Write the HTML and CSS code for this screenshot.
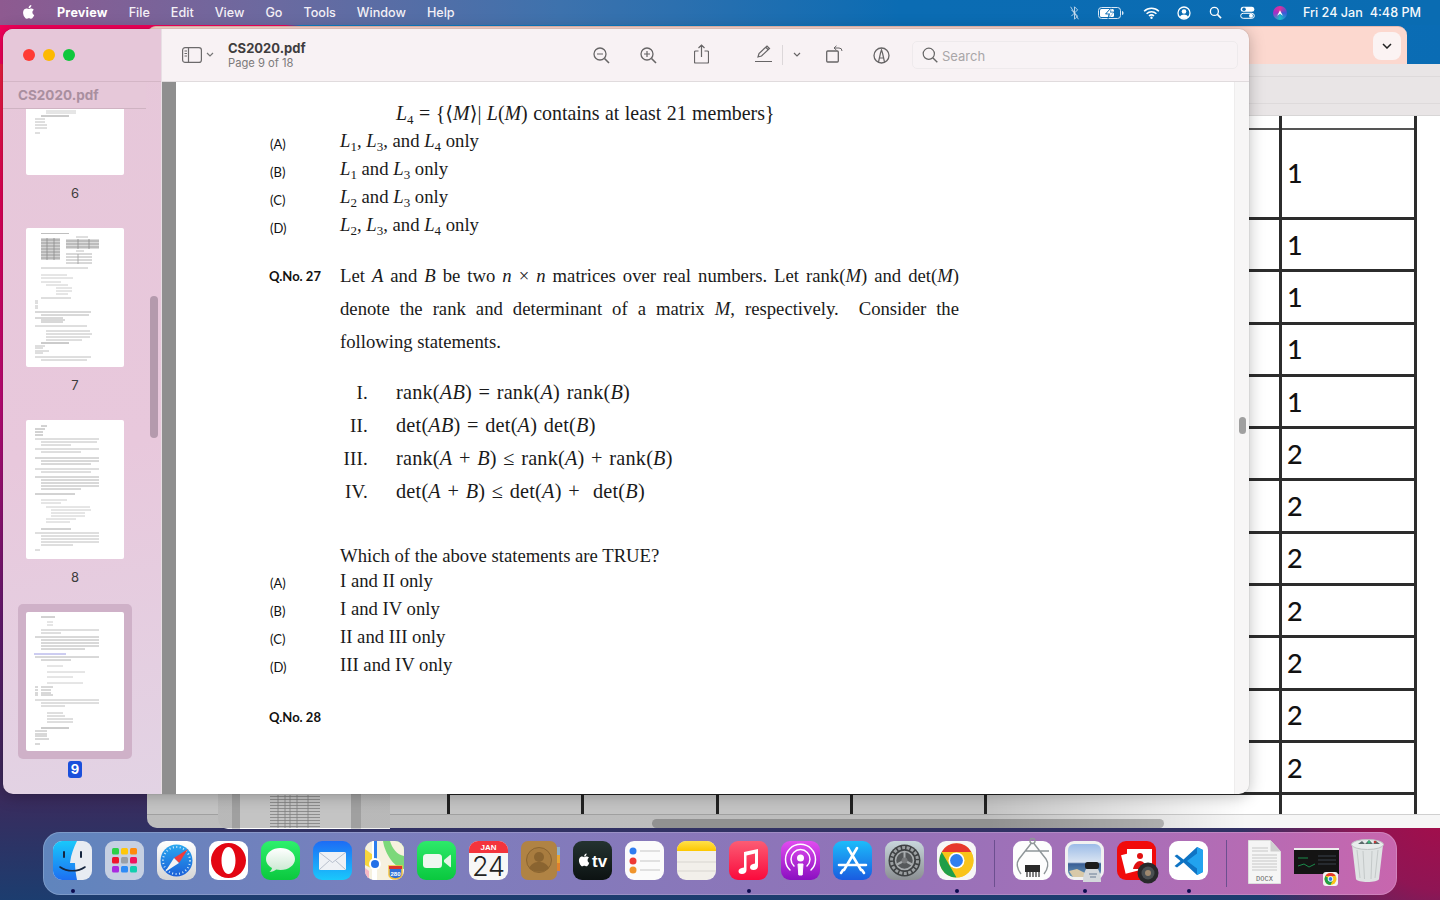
FILE: index.html
```html
<!DOCTYPE html>
<html lang="en">
<head>
<meta charset="utf-8">
<title>Preview - CS2020.pdf</title>
<link rel="stylesheet" href="styles.css">
</head>
<body>
<div class="desktop">

  <header class="menubar">
    <svg class="apple" viewBox="0 0 24 24"><path fill="#fff" d="M17.05 12.54c-.03-2.6 2.13-3.85 2.22-3.91-1.21-1.77-3.09-2.01-3.76-2.04-1.6-.16-3.12.94-3.93.94-.81 0-2.06-.92-3.39-.89-1.74.03-3.35 1.01-4.25 2.57-1.81 3.14-.46 7.8 1.3 10.35.86 1.25 1.89 2.65 3.24 2.6 1.3-.05 1.79-.84 3.36-.84 1.57 0 2.01.84 3.39.81 1.4-.02 2.28-1.27 3.14-2.53.99-1.45 1.4-2.85 1.42-2.92-.03-.01-2.72-1.04-2.74-4.14zM14.46 4.9c.72-.87 1.2-2.08 1.07-3.28-1.03.04-2.28.69-3.02 1.55-.66.77-1.24 2-1.09 3.18 1.15.09 2.33-.58 3.04-1.45z"/></svg>
    <nav class="menus">
      <span class="menu-app">Preview</span><span>File</span><span>Edit</span><span>View</span><span>Go</span><span>Tools</span><span>Window</span><span>Help</span>
    </nav>
    <div class="status">
      <svg class="st st-bt" viewBox="0 0 14 18"><path d="M3 5l8 8-4 4V1l4 4-8 8" fill="none" stroke="#cfe0f0" stroke-width="1.1"/><path d="M2 1l10 16" stroke="#cfe0f0" stroke-width="1.1"/></svg>
      <svg class="st st-bat" viewBox="0 0 26 12"><rect x=".5" y=".5" width="22" height="11" rx="3" fill="none" stroke="#dbe8f5"/><rect x="2" y="2" width="14" height="8" rx="1.5" fill="#fff"/><path d="M24 4v4c1 0 1.500-1 1.500-2s-.5-2-1.500-2z" fill="#dbe8f5"/><path d="M13 .8L7.500 7H11l-1 4.600L16 5h-3.500z" fill="#0a6cb3" stroke="#0a6cb3" stroke-width=".8"/><path d="M13 1.500L8.500 6.500H12l-1 4 4.500-5H12z" fill="#fff"/></svg>
      <svg class="st st-wifi" viewBox="0 0 18 13"><path d="M1 4.600a11.500 11.500 0 0 1 16 0M3.700 7.300a7.600 7.600 0 0 1 10.600 0M6.300 9.800a3.900 3.900 0 0 1 5.400 0" fill="none" stroke="#fff" stroke-width="1.700"/><circle cx="9" cy="11.700" r="1.300" fill="#fff"/></svg>
      <svg class="st st-user" viewBox="0 0 14 14"><circle cx="7" cy="7" r="6" fill="none" stroke="#fff" stroke-width="1.300"/><circle cx="7" cy="5.500" r="2.300" fill="#fff"/><path d="M2.800 11c1-2 2.500-2.600 4.200-2.600s3.200.6 4.200 2.600a6 6 0 0 1-8.400 0z" fill="#fff"/></svg>
      <svg class="st st-search" viewBox="0 0 14 14"><circle cx="5.800" cy="5.800" r="4.300" fill="none" stroke="#fff" stroke-width="1.400"/><path d="M9 9l4 4" stroke="#fff" stroke-width="1.700"/></svg>
      <svg class="st st-ctrl" viewBox="0 0 15 13"><rect x=".7" y=".7" width="13.600" height="5" rx="2.500" fill="#fff"/><circle cx="4" cy="3.200" r="1.800" fill="#0a6cb3"/><rect x=".7" y="7.300" width="13.600" height="5" rx="2.500" fill="none" stroke="#fff"/><circle cx="11" cy="9.800" r="2" fill="#fff"/></svg>
      <span class="siri"><svg viewBox="0 0 14 14"><path d="M7 3L3 11l4-3 4 3z" fill="#fff"/></svg></span>
      <span class="clock"><span>Fri 24 Jan</span><span>4:48 PM</span></span>
    </div>
  </header>

  <section class="win-back">
    <div class="back-head"><span class="back-btn"><svg viewBox="0 0 10 6"><path d="M1 1l4 4 4-4" fill="none" stroke="#222" stroke-width="1.500"/></svg></span></div>
    <div class="back-tools"></div>
    <div class="sheet">
      <div class="cell tall"></div><div class="cell tall"></div><div class="cell tall"></div><div class="cell tall"></div><div class="cell tall"></div><div class="cell tall val">1</div>
      <div class="cell"></div><div class="cell"></div><div class="cell"></div><div class="cell"></div><div class="cell"></div><div class="cell val">1</div>
      <div class="cell"></div><div class="cell"></div><div class="cell"></div><div class="cell"></div><div class="cell"></div><div class="cell val">1</div>
      <div class="cell"></div><div class="cell"></div><div class="cell"></div><div class="cell"></div><div class="cell"></div><div class="cell val">1</div>
      <div class="cell"></div><div class="cell"></div><div class="cell"></div><div class="cell"></div><div class="cell"></div><div class="cell val">1</div>
      <div class="cell"></div><div class="cell"></div><div class="cell"></div><div class="cell"></div><div class="cell"></div><div class="cell val">2</div>
      <div class="cell"></div><div class="cell"></div><div class="cell"></div><div class="cell"></div><div class="cell"></div><div class="cell val">2</div>
      <div class="cell"></div><div class="cell"></div><div class="cell"></div><div class="cell"></div><div class="cell"></div><div class="cell val">2</div>
      <div class="cell"></div><div class="cell"></div><div class="cell"></div><div class="cell"></div><div class="cell"></div><div class="cell val">2</div>
      <div class="cell"></div><div class="cell"></div><div class="cell"></div><div class="cell"></div><div class="cell"></div><div class="cell val">2</div>
      <div class="cell"></div><div class="cell"></div><div class="cell"></div><div class="cell"></div><div class="cell"></div><div class="cell val">2</div>
      <div class="cell"></div><div class="cell"></div><div class="cell"></div><div class="cell"></div><div class="cell"></div><div class="cell val">2</div>
      <div class="cell"></div><div class="cell"></div><div class="cell"></div><div class="cell"></div><div class="cell"></div><div class="cell"></div>
    </div>
    <div class="hscroll"><span class="hthumb"></span></div>
  </section>

  <section class="win-mid">
    <div class="mid-bar"></div>
    <div class="mid-page">
      <svg class="mid-table" viewBox="0 0 50 33"><path d="M0 1.500h50M0 4.500h50M0 7.500h50M0 10.500h50M0 13.500h50M0 16.500h50M0 19.500h50M0 22.500h50M0 25.500h50M0 28.500h50M0 31.500h50" stroke="#a6a6a6" stroke-width=".8"/><path d="M8 0v33M15 0v33M20 0v33M27 0v33M38 0v33" stroke="#a6a6a6" stroke-width=".8"/></svg>
    </div>
    <div class="mid-bar mid-bar-end"></div>
  </section>

  <div class="cast"></div>

  <main class="win-main">
    <aside class="sidebar">
      <div class="side-top">
        <span class="light red"></span><span class="light yellow"></span><span class="light green"></span>
      </div>
      <div class="side-title">CS2020.pdf</div>
      <div class="thumbs">
        <div class="thumb">
          <div class="tp-wrap"><svg class="tpage" viewBox="0 0 98 139"><path d="M20 72h30M20 75h30M20 77h30" stroke="#bbb" fill="none"/><path d="M15 80h28" stroke="#777"/><path d="M9 83h10M9 86h10M9 89h12M9 92h12M9 97h5" stroke="#aaa"/></svg></div>
          <div class="tnum">6</div>
        </div>
        <div class="thumb">
          <div class="tp-wrap"><svg class="tpage" viewBox="0 0 98 139"><path d="M15 5.500h28" stroke="#aaa"/><rect x="15" y="10" width="19" height="22" fill="#d4d4d4"/><path d="M15 12h19M15 15h19M15 18h19M15 21h19M15 24h19M15 27h19M15 30h19M21 10v22M28 10v22" stroke="#888"/><rect x="40" y="11" width="33" height="10" fill="#dcdcdc"/><path d="M40 13h33M40 16h33M40 19h33M52 11v10M63 11v10" stroke="#888"/><path d="M50 9h12M50 23h8" stroke="#aaa"/><path d="M40 26h26M40 29h26M40 32h26M40 35h26M52 26v10" stroke="#999"/><path d="M15 40h47" stroke="#aaa"/><path d="M15 47h26M15 50h32M15 54h20M20 57h22M30 60h16M30 63h16M30 66h12" stroke="#bbb"/><path d="M15 70h30M9 73h3M9 75h3M9 78h3M9 80h3" stroke="#aaa"/><path d="M9 84h6M15 84h50M15 87h48M9 90h6M15 90h22M15 92h24M15 94h22" stroke="#999"/><path d="M9 98h6M15 98h46M20 103h44M20 106h46M20 109h44M20 112h36" stroke="#aaa"/><path d="M15 115h28" stroke="#777"/><path d="M9 118h10M9 120h8M9 123h14M9 125h8" stroke="#aaa"/><path d="M9 129h6M15 129h50M15 132h46" stroke="#aaa"/></svg></div>
          <div class="tnum">7</div>
        </div>
        <div class="thumb">
          <div class="tp-wrap"><svg class="tpage" viewBox="0 0 98 139"><path d="M15 6h6M9 9h10M9 12h8M9 15h8" stroke="#888"/><path d="M9 19h6M15 19h58M15 22h56M15 25h30" stroke="#aaa"/><path d="M9 29h6M15 29h58M15 32h40" stroke="#aaa"/><path d="M9 38h6M15 38h58M15 41h58M15 44h50" stroke="#999"/><path d="M9 49h6M15 49h58M15 52h50" stroke="#aaa"/><path d="M9 57h6M15 57h58M15 60h58M15 63h58M15 66h58M15 69h40" stroke="#999"/><path d="M9 74h6M15 74h34" stroke="#888"/><path d="M15 80h26M15 83h20M20 87h44M25 90h40M25 93h34M25 96h34M20 99h30M20 102h24" stroke="#bbb"/><path d="M15 109h30" stroke="#888"/><path d="M9 113h6M15 113h58M15 116h58M15 119h58M15 122h58M15 125h32" stroke="#aaa"/><path d="M9 130h5" stroke="#aaa"/></svg></div>
          <div class="tnum">8</div>
        </div>
        <div class="thumb current">
          <div class="tp-wrap"><svg class="tpage" viewBox="0 0 98 139"><path d="M15 5h14" stroke="#888"/><path d="M21 10h6M21 13h6" stroke="#bbb"/><path d="M15 18h58M15 21h20" stroke="#aaa"/><path d="M9 25h6M15 25h58M15 28h58M15 31h58M15 34h58M15 37h44" stroke="#999"/><path d="M8 42h32" stroke="#7a7ad8"/><path d="M9 45h6M15 45h58M15 48h30" stroke="#999"/><path d="M21 54h16M21 60h38M21 65h26M21 71h36" stroke="#bbb"/><path d="M9 75h3M15 75h12M9 78h3M15 78h10M9 81h3M15 81h10M9 83h3M15 83h12" stroke="#999"/><path d="M9 88h6M15 88h58M15 91h58M15 94h24" stroke="#aaa"/><path d="M21 101h16M21 104h18M21 107h26M21 110h26" stroke="#aaa"/><path d="M15 116h28" stroke="#777"/><path d="M9 119h12M9 122h12M9 124h12M9 127h14" stroke="#999"/><path d="M9 132h5" stroke="#999"/></svg></div>
          <div class="tnum">9</div>
        </div>
      </div>
      <span class="side-scroll"></span>
    </aside>

    <div class="content">
      <div class="toolbar">
        <svg class="tb-side" viewBox="0 0 20 16"><rect x=".6" y=".6" width="18.800" height="14.800" rx="2.500" fill="none" stroke="#6c6a6b" stroke-width="1.200"/><path d="M6.500 1v14" stroke="#6c6a6b" stroke-width="1.200"/><path d="M2.500 4h2.500M2.500 6.500h2.500M2.500 9h2.500" stroke="#6c6a6b"/></svg>
        <svg class="tb-chev" viewBox="0 0 8 6"><path d="M1 1l3 3 3-3" fill="none" stroke="#777" stroke-width="1.200"/></svg>
        <div class="doc-name"><div class="doc-title">CS2020.pdf</div><div class="doc-page">Page 9 of 18</div></div>
        <div class="tb-icons">
          <svg class="tb zoom-out" viewBox="0 0 17 17"><circle cx="7" cy="7" r="6" fill="none" stroke="#676566" stroke-width="1.300"/><path d="M4 7h6" stroke="#676566" stroke-width="1.200"/><path d="M11.500 11.500l4.500 4.500" stroke="#676566" stroke-width="1.600"/></svg>
          <svg class="tb zoom-in" viewBox="0 0 17 17"><circle cx="7" cy="7" r="6" fill="none" stroke="#676566" stroke-width="1.300"/><path d="M4 7h6M7 4v6" stroke="#676566" stroke-width="1.200"/><path d="M11.500 11.500l4.500 4.500" stroke="#676566" stroke-width="1.600"/></svg>
          <svg class="tb share" viewBox="0 0 15 20"><path d="M4.500 7H1.500a1 1 0 0 0-1 1v10a1 1 0 0 0 1 1h12a1 1 0 0 0 1-1V8a1 1 0 0 0-1-1h-3M7.500 13V1.500M4.500 4l3-3 3 3" fill="none" stroke="#676566" stroke-width="1.200"/></svg>
          <svg class="tb pen" viewBox="0 0 18 18"><path d="M3 12l1-3.500 8-7.500 2.500 2.500-8 7.500zM11 2.500L13.500 5" fill="none" stroke="#676566" stroke-width="1.200"/><path d="M0 16.500h17" stroke="#676566" stroke-width="1.200"/></svg>
          <span class="tb-div"></span>
          <svg class="tb-chev tb-chev2" viewBox="0 0 8 6"><path d="M1 1l3 3 3-3" fill="none" stroke="#676566" stroke-width="1.200"/></svg>
          <svg class="tb rotate" viewBox="0 0 17 18"><rect x=".7" y="6" width="11.600" height="11" rx="1" fill="none" stroke="#676566" stroke-width="1.300"/><path d="M8 3h5a3 3 0 0 1 3 3M10.500 .8L8 3l2.500 2.200" fill="none" stroke="#676566" stroke-width="1"/></svg>
          <svg class="tb markup" viewBox="0 0 17 17"><circle cx="8.500" cy="8.500" r="7.500" fill="none" stroke="#676566" stroke-width="1.300"/><path d="M5.500 15l2-9 1-3 1 3 2 9M6.500 11h4" fill="none" stroke="#676566" stroke-width="1.200"/></svg>
        </div>
        <div class="search">
          <svg viewBox="0 0 16 16"><circle cx="6.800" cy="6.800" r="5.600" fill="none" stroke="#666" stroke-width="1.200"/><path d="M11 11l4.300 4.300" stroke="#666" stroke-width="1.400"/></svg>
          <span>Search</span>
        </div>
      </div>

      <div class="viewer">
        <div class="gutter"></div>
        <article class="page">
          <div class="formula"><span class="m">L<sub>4</sub></span> = {⟨<span class="m">M</span>⟩| <span class="m">L</span>(<span class="m">M</span>) contains at least 21 members}</div>
          <div class="opt"><span class="lab">(A)</span><span><span class="m">L<sub>1</sub></span>, <span class="m">L<sub>3</sub></span>, and <span class="m">L<sub>4</sub></span> only</span></div>
          <div class="opt"><span class="lab">(B)</span><span><span class="m">L<sub>1</sub></span> and <span class="m">L<sub>3</sub></span> only</span></div>
          <div class="opt"><span class="lab">(C)</span><span><span class="m">L<sub>2</sub></span> and <span class="m">L<sub>3</sub></span> only</span></div>
          <div class="opt"><span class="lab">(D)</span><span><span class="m">L<sub>2</sub></span>, <span class="m">L<sub>3</sub></span>, and <span class="m">L<sub>4</sub></span> only</span></div>

          <div class="question">
            <span class="lab qno">Q.No. 27</span>
            <div class="qtext">
              <p class="just">Let <span class="m">A</span> and <span class="m">B</span> be two <span class="m">n</span> × <span class="m">n</span> matrices over real numbers. Let rank(<span class="m">M</span>) and det(<span class="m">M</span>)</p>
              <p class="just">denote the rank and determinant of a matrix <span class="m">M</span>, respectively. &nbsp;Consider the</p>
              <p>following statements.</p>
            </div>
          </div>

          <div class="stmts">
            <div class="stmt"><span class="rom">I.</span><span>rank(<span class="m">AB</span>) = rank(<span class="m">A</span>) rank(<span class="m">B</span>)</span></div>
            <div class="stmt"><span class="rom">II.</span><span>det(<span class="m">AB</span>) = det(<span class="m">A</span>) det(<span class="m">B</span>)</span></div>
            <div class="stmt"><span class="rom">III.</span><span>rank(<span class="m">A</span> + <span class="m">B</span>) ≤ rank(<span class="m">A</span>) + rank(<span class="m">B</span>)</span></div>
            <div class="stmt"><span class="rom">IV.</span><span>det(<span class="m">A</span> + <span class="m">B</span>) ≤ det(<span class="m">A</span>) + &nbsp;det(<span class="m">B</span>)</span></div>
          </div>

          <div class="which">Which of the above statements are TRUE?</div>
          <div class="opt"><span class="lab">(A)</span><span>I and II only</span></div>
          <div class="opt"><span class="lab">(B)</span><span>I and IV only</span></div>
          <div class="opt"><span class="lab">(C)</span><span>II and III only</span></div>
          <div class="opt"><span class="lab">(D)</span><span>III and IV only</span></div>
          <div class="qnext"><span class="lab qno">Q.No. 28</span></div>
        </article>
        <div class="vscroll"><span class="vthumb"></span></div>
      </div>
    </div>
  </main>

  <footer class="dock">
    <!-- Finder -->
    <span class="di run"><svg viewBox="0 0 39 39"><defs><linearGradient id="fb" x1="0" y1="0" x2="0" y2="1"><stop offset="0" stop-color="#19c8fb"/><stop offset="1" stop-color="#1d6ff2"/></linearGradient></defs><rect width="39" height="39" rx="9" fill="#e8ecf2"/><path d="M9 0h15c-3 6-6 13-7 22h5c0 6 1 12 2 17H9a9 9 0 0 1-9-9V9a9 9 0 0 1 9-9z" fill="url(#fb)"/><path d="M11 11v5M28 11v5" stroke="#16263f" stroke-width="2" stroke-linecap="round"/><path d="M7 26c7 5 18 5 25 0" fill="none" stroke="#16263f" stroke-width="1.600" stroke-linecap="round"/></svg></span>
    <!-- Launchpad -->
    <span class="di"><svg viewBox="0 0 39 39"><rect width="39" height="39" rx="9" fill="#c6d0e2"/><rect x="7" y="7" width="7" height="6.500" rx="1.500" fill="#2bd146"/><rect x="16" y="7" width="7" height="6.500" rx="1.500" fill="#ffc70a"/><rect x="25" y="7" width="7" height="6.500" rx="1.500" fill="#ff8a0c"/><rect x="7" y="16" width="7" height="6.500" rx="1.500" fill="#f0142c"/><rect x="16" y="16" width="7" height="6.500" rx="1.500" fill="#9aa0a8"/><rect x="25" y="16" width="7" height="6.500" rx="1.500" fill="#f2155e"/><rect x="7" y="25" width="7" height="6.500" rx="1.500" fill="#a92be0"/><rect x="16" y="25" width="7" height="6.500" rx="1.500" fill="#2f8bf5"/><rect x="25" y="25" width="7" height="6.500" rx="1.500" fill="#12cfae"/></svg></span>
    <!-- Safari -->
    <span class="di"><svg viewBox="0 0 39 39"><defs><linearGradient id="sf" x1="0" y1="0" x2="0" y2="1"><stop offset="0" stop-color="#fff"/><stop offset="1" stop-color="#d5d5d5"/></linearGradient><linearGradient id="sb" x1="0" y1="0" x2="0" y2="1"><stop offset="0" stop-color="#2aa8ef"/><stop offset="1" stop-color="#1a5fd8"/></linearGradient></defs><rect width="39" height="39" rx="9" fill="url(#sf)"/><circle cx="19.500" cy="19.500" r="16" fill="url(#sb)"/><circle cx="19.500" cy="19.500" r="13.500" fill="none" stroke="#cfe8fb" stroke-width="2" stroke-dasharray="1 2.500"/><path d="M31 8L17 17l5 5z" fill="#f23a3a"/><path d="M8 31l14-9-5-5z" fill="#f3f3f3"/></svg></span>
    <!-- Opera -->
    <span class="di"><svg viewBox="0 0 39 39"><rect width="39" height="39" rx="9" fill="#fff"/><path fill-rule="evenodd" d="M19.500 2C29 2 37 9.800 37 19.500S29 37 19.500 37 2 29.200 2 19.500 10 2 19.500 2zm0 4c-4 0-7 6-7 13.500S15.500 33 19.500 33s7-6 7-13.500S23.500 6 19.500 6z" fill="#e30613"/></svg></span>
    <!-- Messages -->
    <span class="di"><svg viewBox="0 0 39 39"><defs><linearGradient id="mg" x1="0" y1="0" x2="0" y2="1"><stop offset="0" stop-color="#2df06c"/><stop offset="1" stop-color="#0bc83e"/></linearGradient><linearGradient id="mw" x1="0" y1="0" x2="0" y2="1"><stop offset="0" stop-color="#fff"/><stop offset="1" stop-color="#c8e8d0"/></linearGradient></defs><rect width="39" height="39" rx="9" fill="url(#mg)"/><path d="M19.500 7C11.500 7 5 11.800 5 18c0 3.800 2.400 7 6 9-.3 1.800-1.400 3-2.600 4 2.700-.1 5-1 6.800-2.500 1.400.3 2.800.5 4.300.5 8 0 14.500-4.800 14.500-11S27.500 7 19.500 7z" fill="url(#mw)"/></svg></span>
    <!-- Mail -->
    <span class="di"><svg viewBox="0 0 39 39"><defs><linearGradient id="ma" x1="0" y1="0" x2="0" y2="1"><stop offset="0" stop-color="#1d6cf5"/><stop offset="1" stop-color="#1ac8fc"/></linearGradient></defs><rect width="39" height="39" rx="9" fill="url(#ma)"/><rect x="6" y="11" width="27" height="18" rx="1.500" fill="#eef1f5"/><path d="M6.500 11.500l13 10 13-10M6.500 28.500l10-9M32.500 28.500l-10-9" fill="none" stroke="#a9b2c2" stroke-width=".8"/></svg></span>
    <!-- Maps -->
    <span class="di"><svg viewBox="0 0 39 39"><defs><clipPath id="mc"><rect width="39" height="39" rx="9"/></clipPath></defs><g clip-path="url(#mc)"><rect width="39" height="39" fill="#f6f1df"/><path d="M18 0h21v28C31 28 20 14 18 0z" fill="#7bd87a"/><path d="M25 0h14v15C32 14 27 7 25 0z" fill="#f6f1df"/><path d="M0 8l8 6v14l-8-4z" fill="#f8d63c"/><path d="M0 27l4 3v9H0z" fill="#f7b7c4"/><rect x="7" y="0" width="5" height="39" fill="#fff"/><rect x="9" y="0" width="3" height="20" fill="#2c7df0"/><circle cx="10" cy="23" r="6" fill="#fff"/><circle cx="10" cy="23" r="4" fill="#2270e8"/><path d="M24 25h13v9c0 2-3 4-6.500 4S24 36 24 34z" fill="#2f6fd8" stroke="#f5c23c" stroke-width="1.500"/><path d="M24 25h13v3H24z" fill="#d8352f"/><text x="30.500" y="35" font-size="6" font-family="Liberation Sans" font-weight="700" fill="#fff" text-anchor="middle">280</text></g></svg></span>
    <!-- FaceTime -->
    <span class="di"><svg viewBox="0 0 39 39"><defs><linearGradient id="ft" x1="0" y1="0" x2="0" y2="1"><stop offset="0" stop-color="#2de96a"/><stop offset="1" stop-color="#0ac83e"/></linearGradient></defs><rect width="39" height="39" rx="9" fill="url(#ft)"/><rect x="6" y="13" width="19" height="14" rx="3.500" fill="#eef7ef"/><path d="M27 19l6-5c.5-.4 1-.2 1 .5v11c0 .7-.5.9-1 .5l-6-5z" fill="#e4f5e6"/></svg></span>
    <!-- Calendar -->
    <span class="di"><svg viewBox="0 0 39 39"><defs><clipPath id="cc"><rect width="39" height="39" rx="9"/></clipPath></defs><g clip-path="url(#cc)"><rect width="39" height="39" fill="#f7f7f7"/><rect width="39" height="12" fill="#f4343c"/><text x="19.500" y="9" font-size="8" font-weight="700" font-family="Liberation Sans" fill="#fff" text-anchor="middle">JAN</text><text x="19.500" y="35" font-size="27" font-family="Inter" font-weight="300" fill="#222" text-anchor="middle">24</text></g></svg></span>
    <!-- Contacts -->
    <span class="di"><svg viewBox="0 0 39 39"><rect x="34" y="6" width="5" height="8" fill="#8fb0cc"/><rect x="34" y="14" width="5" height="8" fill="#e8a532"/><rect x="34" y="22" width="5" height="8" fill="#e0802e"/><rect width="36" height="39" rx="7" fill="#b08344"/><circle cx="18" cy="19" r="12.500" fill="#a87c3f" stroke="#8a6430"/><circle cx="18" cy="16" r="5" fill="#8a6430"/><path d="M8 27c3-5 6-6 10-6s7 1 10 6c-5 5-15 5-20 0z" fill="#8a6430"/></svg></span>
    <!-- TV -->
    <span class="di"><svg viewBox="0 0 39 39"><defs><linearGradient id="tv" x1="0" y1="0" x2="0" y2="1"><stop offset="0" stop-color="#243330"/><stop offset="1" stop-color="#0c1212"/></linearGradient></defs><rect width="39" height="39" rx="9" fill="url(#tv)"/><path transform="translate(4 11.500) scale(.62)" fill="#fff" d="M17.050 12.540c-.03-2.600 2.130-3.850 2.220-3.910-1.210-1.770-3.090-2.010-3.760-2.040-1.600-.16-3.120.94-3.930.94-.81 0-2.060-.92-3.390-.89-1.740.03-3.350 1.010-4.250 2.570-1.810 3.140-.46 7.800 1.300 10.350.86 1.250 1.890 2.650 3.240 2.600 1.300-.05 1.790-.84 3.360-.84 1.570 0 2.010.84 3.390.81 1.400-.02 2.280-1.270 3.140-2.530.99-1.450 1.400-2.850 1.420-2.920-.03-.01-2.720-1.040-2.740-4.140zM14.460 4.900c.72-.87 1.200-2.080 1.070-3.280-1.030.04-2.280.69-3.020 1.550-.66.77-1.240 2-1.090 3.180 1.150.09 2.330-.58 3.040-1.450z"/><text x="19" y="26" font-size="17" font-weight="700" font-family="Liberation Sans" fill="#fff">tv</text></svg></span>
    <!-- Reminders -->
    <span class="di"><svg viewBox="0 0 39 39"><rect width="39" height="39" rx="9" fill="#fbfbfb"/><circle cx="8" cy="10" r="3.500" fill="#2f7df0"/><circle cx="8" cy="20" r="3.500" fill="#ee3a34"/><circle cx="8" cy="29" r="3.500" fill="#f0952c"/><path d="M15 10h20M15 20h20M15 29h20" stroke="#c8c8c8" stroke-width="1.200"/></svg></span>
    <!-- Notes -->
    <span class="di"><svg viewBox="0 0 39 39"><defs><clipPath id="nc"><rect width="39" height="39" rx="9"/></clipPath><linearGradient id="ny" x1="0" y1="0" x2="0" y2="1"><stop offset="0" stop-color="#ffe04a"/><stop offset="1" stop-color="#fdc700"/></linearGradient></defs><g clip-path="url(#nc)"><rect width="39" height="39" fill="#f2efea"/><rect width="39" height="10" fill="url(#ny)"/><path d="M0 21h39M0 30h39" stroke="#d8d5d0"/></g></svg></span>
    <!-- Music -->
    <span class="di run"><svg viewBox="0 0 39 39"><defs><linearGradient id="mu" x1="0" y1="0" x2="0" y2="1"><stop offset="0" stop-color="#fb5c74"/><stop offset="1" stop-color="#fa0a3c"/></linearGradient></defs><rect width="39" height="39" rx="9" fill="url(#mu)"/><path d="M15 11l14-3v17c0 2.500-2 4-4.500 4s-3.500-1.200-3.500-2.800c0-2 2-3.200 5-3.700V12.500l-8.500 2V29c0 2.500-2 4-4.500 4S9.500 31.800 9.500 30.200c0-2 2-3.200 5.500-3.700z" fill="#fff"/></svg></span>
    <!-- Podcasts -->
    <span class="di"><svg viewBox="0 0 39 39"><defs><linearGradient id="pc" x1="0" y1="0" x2="0" y2="1"><stop offset="0" stop-color="#e14cf0"/><stop offset="1" stop-color="#8a0fc0"/></linearGradient></defs><rect width="39" height="39" rx="9" fill="url(#pc)"/><path d="M9 29a15 15 0 1 1 21 0M13 25a9.500 9.500 0 1 1 13 0" fill="none" stroke="#fff" stroke-width="1.500" stroke-linecap="round"/><circle cx="19.500" cy="17" r="3.500" fill="#fff"/><path d="M17 23h5l-.8 11h-3.400z" fill="#fff" stroke="#fff" stroke-linejoin="round"/></svg></span>
    <!-- App Store -->
    <span class="di"><svg viewBox="0 0 39 39"><defs><linearGradient id="as" x1="0" y1="0" x2="0" y2="1"><stop offset="0" stop-color="#1cbcfa"/><stop offset="1" stop-color="#1a5ce0"/></linearGradient></defs><rect width="39" height="39" rx="9" fill="url(#as)"/><path d="M15 7l13 22M24 7L11 29M6 24h27M10 29l-2 3M29 29l2 3" stroke="#fff" stroke-width="2.600" stroke-linecap="round" fill="none"/></svg></span>
    <!-- System Preferences -->
    <span class="di"><svg viewBox="0 0 39 39"><defs><linearGradient id="sp" x1="0" y1="0" x2="0" y2="1"><stop offset="0" stop-color="#c8d6dc"/><stop offset="1" stop-color="#8b8f92"/></linearGradient></defs><rect width="39" height="39" rx="9" fill="url(#sp)"/><circle cx="19.500" cy="19.500" r="16" fill="#3f4244"/><circle cx="19.500" cy="19.500" r="13" fill="none" stroke="#9b9fa1" stroke-width="3" stroke-dasharray="3 1.500"/><circle cx="19.500" cy="19.500" r="9" fill="#55585a" stroke="#a8acae" stroke-width="1.500"/><path d="M19.500 19.500V11M19.500 19.500l7.500 4M19.500 19.500l-7.500 4" stroke="#a8acae" stroke-width="2"/><circle cx="19.500" cy="19.500" r="3" fill="#77797b"/></svg></span>
    <!-- Chrome -->
    <span class="di run"><svg viewBox="0 0 39 39"><rect width="39" height="39" rx="9" fill="#f6f6f6"/><circle cx="19.500" cy="19.500" r="17" fill="#f9c41a"/><path d="M4.700 11A17 17 0 0 1 34.300 11H19.500z" fill="#e7372d"/><path d="M4.700 11l9.900 17L19.500 36.500A17 17 0 0 1 4.700 11z" fill="#1f9e48"/><path d="M19.500 36.500L28 21 34.300 11A17 17 0 0 1 36.500 19.500c0 9.400-7.600 17-17 17z" fill="#f9c41a"/><circle cx="19.500" cy="19.500" r="8" fill="#fff"/><circle cx="19.500" cy="19.500" r="6.400" fill="#2f7ff0"/></svg></span>

    <span class="dsep sep1"></span>

    <!-- Caliper -->
    <span class="di"><svg viewBox="0 0 39 39"><rect width="39" height="39" rx="9" fill="#fdfdfd"/><g fill="none" stroke="#8f9699" stroke-width="1.400"><circle cx="19.500" cy="0" r="2.500"/><path d="M18.500 2L6 18c-3 4-2 10 2 15M20.500 2L33 18c3 4 2 10-2 15M12 10h24"/></g><rect x="12" y="24" width="15" height="7" fill="#2a2a2a"/><path d="M14 31v5M17 31v5M20 31v5M23 31v5M26 31v5" stroke="#555" stroke-width="1.500"/></svg></span>
    <!-- Preview -->
    <span class="di run"><svg viewBox="0 0 39 39"><defs><linearGradient id="pv" x1="0" y1="0" x2="0" y2="1"><stop offset="0" stop-color="#9cbce8"/><stop offset=".55" stop-color="#d9e4f2"/><stop offset=".6" stop-color="#3a5f96"/><stop offset="1" stop-color="#6b9ab8"/></linearGradient></defs><rect width="39" height="39" rx="9" fill="#f1f1f1"/><rect x="3" y="3" width="33" height="33" rx="6" fill="url(#pv)"/><path d="M4 30l8-2 8 4v4H8z" fill="#d8c9a8"/><path d="M18 41c0-6 1-9 3-13h12c2 4 3 7 3 13z" fill="#d4d8dc"/><rect x="20" y="21" width="14" height="7" rx="2.500" fill="#1c1c1c"/><path d="M24 33h8M25 36h6" stroke="#6b7c94"/></svg></span>
    <!-- Photo Booth -->
    <span class="di"><svg viewBox="0 0 39 39"><rect width="39" height="39" rx="9" fill="#f10b0b"/><rect x="6" y="12" width="16" height="19" fill="#fff" transform="rotate(-14 14 21)"/><rect x="10" y="8" width="25" height="21" fill="#fff"/><circle cx="23" cy="15" r="3" fill="#e01010"/><path d="M16 28c1-5 4-8 7-8s6 3 7 8z" fill="#e01010"/><circle cx="31" cy="32" r="10.500" fill="#28292b"/><circle cx="31" cy="32" r="6.500" fill="#4a4f52"/><circle cx="31" cy="32" r="3" fill="#a08a70"/></svg></span>
    <!-- VS Code -->
    <span class="di run"><svg viewBox="0 0 39 39"><rect width="39" height="39" rx="9" fill="#fff"/><path d="M28 6L14.500 18.500 8 13.500 5.500 15l6 5-6 5L8 26.500l6.500-5L28 34l6-3V9z" fill="#0f74c4"/><path d="M28 6l6 3v22l-6 3V12.500L18 20l10 7.500" fill="#22a3ef"/></svg></span>

    <span class="dsep sep2"></span>

    <!-- Docx -->
    <span class="di doc"><svg viewBox="0 0 33 44"><path d="M.5.500h22l10 11v32H.5z" fill="#f5f5f5" stroke="#ddd"/><path d="M22.500.500v11h10z" fill="#cfcfcf"/><path d="M4 8h16M4 11h16M4 15h25M4 18h25M4 21h25M4 24h25M4 27h25M4 30h25" stroke="#bbb" stroke-width=".8"/><text x="16.500" y="41" font-size="7" font-family="Liberation Mono" fill="#666" text-anchor="middle">DOCX</text></svg></span>
    <!-- Screenshot stack -->
    <span class="di shot"><svg viewBox="0 0 46 40"><rect y="2" width="45" height="26" fill="#141414"/><rect y="2" width="45" height="2" fill="#eee"/><path d="M4 12h10M4 20l6-2 5 3 6-3" stroke="#1a8a4a" fill="none"/><path d="M24 10h18M24 14h18M24 18h18" stroke="#39414a"/><rect x="29" y="26" width="15" height="14" rx="3" fill="#f3f3f3"/><circle cx="36.500" cy="33" r="6" fill="#f9c41a"/><path d="M31.300 30a6 6 0 0 1 10.400 0h-5.200z" fill="#e7372d"/><path d="M31.300 30a6 6 0 0 0 5.200 9l2-4z" fill="#1f9e48"/><circle cx="36.500" cy="33" r="2.400" fill="#2f7ff0" stroke="#fff"/></svg></span>
    <!-- Trash -->
    <span class="di trash"><svg viewBox="0 0 35 44"><path d="M2 7c3 2 28 2 31 0L29 41c-.5 2-6 3-11.500 3S6.500 43 6 41z" fill="#dfe3e3"/><path d="M7 12l3 28M13 13l1.500 28M22 13l-1 28M28 12l-3 28" stroke="#c4c9c9"/><ellipse cx="17.500" cy="6.500" rx="16" ry="5" fill="#e8ecec" stroke="#bfc4c4"/><path d="M8 6l4-3 3 3zM15 6l4-4 4 4zM23 6l3-3 4 3z" fill="#5a6a6a"/><circle cx="19" cy="4" r="1.500" fill="#38b87a"/><circle cx="25" cy="4" r="1.300" fill="#c03a3a"/></svg></span>
  </footer>

</div>
</body>
</html>
```

FILE: styles.css
```css
* { box-sizing: border-box; }
html, body { margin: 0; padding: 0; }
body { width: 1440px; height: 900px; overflow: hidden; font-family: Inter, "Liberation Sans", sans-serif; }

.desktop {
  position: relative;
  width: 1440px;
  height: 900px;
  overflow: hidden;
  background:
    linear-gradient(90deg, #f2005a 0, #f2005a 285px, #0f7cc0 300px, #0a6cb4 100%) 0 0 / 100% 64px no-repeat,
    radial-gradient(circle 200px at 1440px 810px, #a50d4a 0, #8f1554 40%, rgba(85,58,120,0) 100%),
    linear-gradient(180deg, #f0203f 60px, #e40058 200px, #c00a78 400px, #671a72 620px, #3c2a5c 790px, #1c3d6f 900px);
}

/* menu bar */
.menubar {
  position: relative;
  display: flex;
  align-items: center;
  height: 25px;
  padding-left: 21px;
  color: #fff;
  font-size: 12.600px;
  background: linear-gradient(90deg, #8e5a90 0, #6a6aa0 280px, #3d72ad 560px, #0b6cb3 900px, #0a6cb2 100%);
}
.apple { width: 16px; height: 16px; margin-top: -2px; }
.menus { display: flex; gap: 21px; margin-left: 20px; font-weight: 500; color: #f4f0f6; }
.menu-app { font-weight: 700; color: #fff; letter-spacing: .2px; }
.status { display: flex; align-items: center; margin-left: auto; height: 25px; padding-right: 19px; }
.st { display: block; flex: none; }
.st-bt { width: 11px; height: 14px; margin-right: 18px; }
.st-bat { width: 26px; height: 12px; margin-right: 19px; }
.st-wifi { width: 17px; height: 12px; margin-right: 17px; }
.st-user { width: 14px; height: 14px; margin-right: 18px; }
.st-search { width: 13px; height: 13px; margin-right: 18px; }
.st-ctrl { width: 15px; height: 13px; margin-right: 18px; }
.siri { display: flex; align-items: center; justify-content: center; width: 14px; height: 14px; border-radius: 50%; margin-right: 16px; background: conic-gradient(#e0309a, #3a58d8, #18c0c8, #a030c8, #e0309a); }
.siri svg { width: 10px; height: 10px; }
.clock { display: flex; gap: 7px; font-size: 12.600px; font-weight: 500; color: #f4f8fc; white-space: nowrap; }

/* back window */
.win-back {
  position: absolute;
  left: 147px;
  top: 26px;
  width: 1293px;
  height: 802px;
  display: flex;
  flex-direction: column;
  border-bottom-left-radius: 10px;
  overflow: hidden;
}
.back-head {
  display: flex;
  justify-content: flex-end;
  align-items: center;
  flex: none;
  height: 38px;
  margin-right: 33px;
  padding-right: 6px;
  background: #fcd8cf;
  border-radius: 9px 9px 0 0;
  border-top: 1px solid #e9b9ae;
}
.back-btn {
  display: flex;
  align-items: center;
  justify-content: center;
  width: 28px;
  height: 28px;
  border-radius: 8px;
  background: #fbf3f3;
}
.back-btn svg { width: 10px; height: 6px; }
.back-tools {
  flex: none;
  height: 52px;
  background: #e9e5e6;
  background-image: linear-gradient(180deg, transparent 12px, #dedadb 12px, #dedadb 13px, transparent 13px, transparent 39px, #dedadb 39px, #dedadb 40px, transparent 40px);
  border-bottom: 1px solid #d8d6d6;
}
.sheet {
  flex: 1;
  min-height: 0;
  overflow: hidden;
  display: grid;
  grid-template-columns: 300px 137px 135px 134px 134px 295px 135px;
  grid-template-rows: 104px;
  grid-auto-rows: 52.300px;
  align-content: start;
  background: #fff;
}
.cell { border-right: 3px solid #2c2c2c; border-bottom: 3px solid #2c2c2c; }
.cell:nth-child(6n+1) { grid-column: 2; border-left: 3px solid #2c2c2c; }
.tall { padding-top: 13px; background: linear-gradient(#555, #555) 0 12px / 100% 2px no-repeat; }
.val {
  display: flex;
  align-items: center;
  padding-bottom: 1px;
  padding-left: 5px;
  font-family: Lato, "Liberation Sans", sans-serif;
  font-size: 27px;
  font-weight: 500;
  color: #111;
}
.hscroll {
  flex: none;
  height: 14px;
  padding: 4px 0 1px 505px;
  background: #f6f6f6;
  border-top: 1px solid #d0d0d0;
}
.hthumb { display: block; width: 512px; height: 9px; border-radius: 5px; background: #bcbcbc; }

/* middle window */
.win-mid {
  position: absolute;
  left: 218px;
  top: 700px;
  width: 172px;
  height: 129px;
  display: flex;
  padding-left: 14px;
  background: #f0f0f0;
  border-bottom-left-radius: 10px;
  overflow: hidden;
}
.mid-bar { flex: none; width: 8px; background: #d0d0d0; }
.mid-bar-end { flex: 1; background: linear-gradient(90deg, #d0d0d0 0 10px, #f0f0f0 10px); }
.mid-page { width: 111px; padding: 95px 0 0 30px; background: #fff; flex: none; }
.mid-table { display: block; width: 50px; height: 33px; }

/* shadow the front window casts on what lies below it */
.cast {
  position: absolute;
  left: 147px;
  top: 790px;
  width: 1293px;
  height: 38px;
  border-bottom-left-radius: 10px;
  background: linear-gradient(90deg, rgba(0,0,0,.23) 0, rgba(0,0,0,.23) 65%, rgba(0,0,0,0) 85%);
}

/* main window */
.win-main {
  position: absolute;
  left: 3px;
  top: 29px;
  width: 1246px;
  height: 765px;
  display: flex;
  border-radius: 10px;
  overflow: hidden;
  box-shadow: 0 2px 16px rgba(0,0,0,.26), 0 0 1px rgba(0,0,0,.4);
}
.sidebar {
  position: relative;
  flex: none;
  width: 159px;
  overflow: hidden;
  background: linear-gradient(170deg, #e6c7d9 0, #e8c8dc 55%, #e2d3e4 100%);
  border-right: 1px solid #e8dfe4;
}
.side-top {
  position: relative;
  z-index: 2;
  display: flex;
  align-items: center;
  gap: 8px;
  height: 53px;
  padding-left: 20px;
  background: #e6c7d9;
  border-bottom: 1px solid #d4b6c6;
}
.light { width: 12px; height: 12px; border-radius: 50%; }
.red { background: #ff3b35; }
.yellow { background: #fdb900; }
.green { background: #0fc73c; }
.side-title {
  position: relative;
  z-index: 2;
  height: 27px;
  width: 143px;
  padding: 5px 0 0 15px;
  font-size: 13.500px;
  font-weight: 700;
  color: #a98f9f;
  background: #e6c8d9;
  border-bottom: 1px solid #cfb3c2;
}
.thumbs { margin-top: -81px; }
.thumb { width: 114px; height: 192px; margin-left: 15px; padding-top: 8px; text-align: center; }
.tp-wrap { width: 114px; height: 155px; margin-top: -8px; padding: 8px; border-radius: 5px; }
.tpage { display: block; width: 98px; height: 139px; background: #fff; border-radius: 2px; }
.tpage path { stroke-width: .75; fill: none; }
.tnum { height: 21px; padding-top: 1px; font-size: 13px; line-height: 18px; color: #3d3d3d; }
.current .tp-wrap { background: #cfb1c8; }
.current .tnum {
  width: 14px;
  height: 17px;
  margin: 2px auto 0;
  padding: 0;
  font-weight: 700;
  line-height: 17px;
  color: #fff;
  border-radius: 3px;
  background: #1a4fdb;
}
.side-scroll {
  position: absolute;
  left: 147px;
  top: 267px;
  width: 8px;
  height: 142px;
  border-radius: 4px;
  background: #b49aad;
}

.content { flex: 1; min-width: 0; display: flex; flex-direction: column; }
.toolbar {
  flex: none;
  height: 53px;
  display: flex;
  align-items: center;
  padding-left: 20px;
  background: #f8f2f4;
  border-bottom: 1px solid #e0dbdd;
}
.tb-side { width: 20px; height: 16px; flex: none; }
.tb-chev { width: 8px; height: 6px; flex: none; margin-left: 4px; }
.doc-name { margin-left: 14px; width: 200px; flex: none; }
.doc-title { font-size: 13px; font-weight: 700; color: #3f3d3e; line-height: 15px; }
.doc-page { font-size: 11.200px; color: #7c7a7b; line-height: 14px; }
.tb-icons { display: flex; align-items: center; flex: none; margin-left: 165px; }
.tb { flex: none; display: block; }
.zoom-out { width: 17px; height: 17px; }
.zoom-in { width: 17px; height: 17px; margin-left: 30px; }
.share { width: 15px; height: 20px; margin-left: 37px; margin-top: -3px; }
.pen { width: 18px; height: 18px; margin-left: 46px; margin-top: -3px; }
.tb-div { width: 1px; height: 20px; background: #dcd7d9; margin-left: 9px; }
.tb-chev2 { margin-left: 10px; }
.rotate { width: 17px; height: 18px; margin-left: 25px; margin-top: -3px; }
.markup { width: 17px; height: 17px; margin-left: 30px; }
.search {
  flex: none;
  display: flex;
  align-items: center;
  gap: 4px;
  width: 326px;
  height: 28px;
  margin-left: 22px;
  padding-left: 9px;
  border: 1px solid #eeeaec;
  border-radius: 5px;
  background: #f8f3f5;
  font-size: 13px;
  color: #a9a6a8;
}
.search span { padding-top: 1px; }
.search svg { width: 16px; height: 16px; }

.viewer { flex: 1; min-height: 0; display: flex; }
.gutter { flex: none; width: 14px; background: #8f8f8f; }
.page {
  flex: 1;
  min-width: 0;
  padding: 17px 0 0 93px;
  background: #fff;
  font-family: "Liberation Serif", "DejaVu Serif", serif;
  font-size: 18.700px;
  color: #1a1a1a;
  overflow: hidden;
}
.m { font-style: italic; }
sub { font-size: 13px; line-height: 0; font-style: normal; vertical-align: -4px; }
.formula { height: 28px; line-height: 28px; padding-left: 127px; font-size: 19.900px; word-spacing: .5px; }
.opt { display: grid; grid-template-columns: 71px 1fr; height: 28px; line-height: 28px; }
.lab { padding: 3px 0 0 1px; font-family: Lato, "Liberation Sans", sans-serif; font-size: 13px; color: #111; }
.which ~ .opt .lab { padding-top: 2px; }
.qno { font-weight: 700; }
.question { display: grid; grid-template-columns: 71px 619px; margin-top: 20px; }
.question .lab { padding-top: 1px; padding-left: 0; line-height: 33px; }
.qtext p { margin: 0; height: 33px; line-height: 33px; }
.just { text-align: justify; text-align-last: justify; }
.stmts { margin-top: 18px; padding-left: 71px; }
.stmt { display: grid; grid-template-columns: 28px 1fr; column-gap: 28px; height: 33px; line-height: 33px; font-size: 20.300px; word-spacing: 1.300px; letter-spacing: .2px; }
.rom { text-align: right; font-size: 19px; }
.which { margin-top: 36px; height: 23px; line-height: 23px; padding-left: 71px; }
.qnext { height: 28px; line-height: 28px; margin-top: 23px; }
.qnext .lab { padding: 0; }
.vscroll { flex: none; width: 15px; padding: 335px 0 0 4px; background: #f7f6f6; border-left: 1px solid #eeeded; }
.vthumb { display: block; width: 7px; height: 17px; border-radius: 4px; background: #a0a0a0; }

/* dock */
.dock {
  position: absolute;
  left: 43px;
  top: 832px;
  width: 1354px;
  height: 63px;
  display: flex;
  align-items: flex-start;
  gap: 13px;
  padding: 9px 0 0 10px;
  border-radius: 17px;
  background: linear-gradient(95deg, #5f85bd 0, #7a7fbd 25%, #9173b8 60%, #a86fb8 80%, #c866ae 100%);
  box-shadow: inset 0 0 0 1px rgba(255,255,255,.18);
}
.di { position: relative; display: block; flex: none; width: 39px; height: 39px; }
.di svg { display: block; width: 100%; height: 100%; overflow: visible; }
.run::after {
  content: "";
  position: absolute;
  left: 17.500px;
  top: 48px;
  width: 4px;
  height: 4px;
  border-radius: 50%;
  background: #0c0c50;
}
.dsep { flex: none; width: 1px; height: 47px; background: #6c4f8f; }
.sep1 { margin: -1px 5px 0 5px; }
.sep2 { margin: -1px 8px 0 5px; }
.doc { width: 33px; height: 44px; margin-top: -1px; }
.shot { width: 46px; height: 40px; margin-top: 5px; }
.trash { width: 35px; height: 44px; margin: -3px 0 0 -3px; }
```
